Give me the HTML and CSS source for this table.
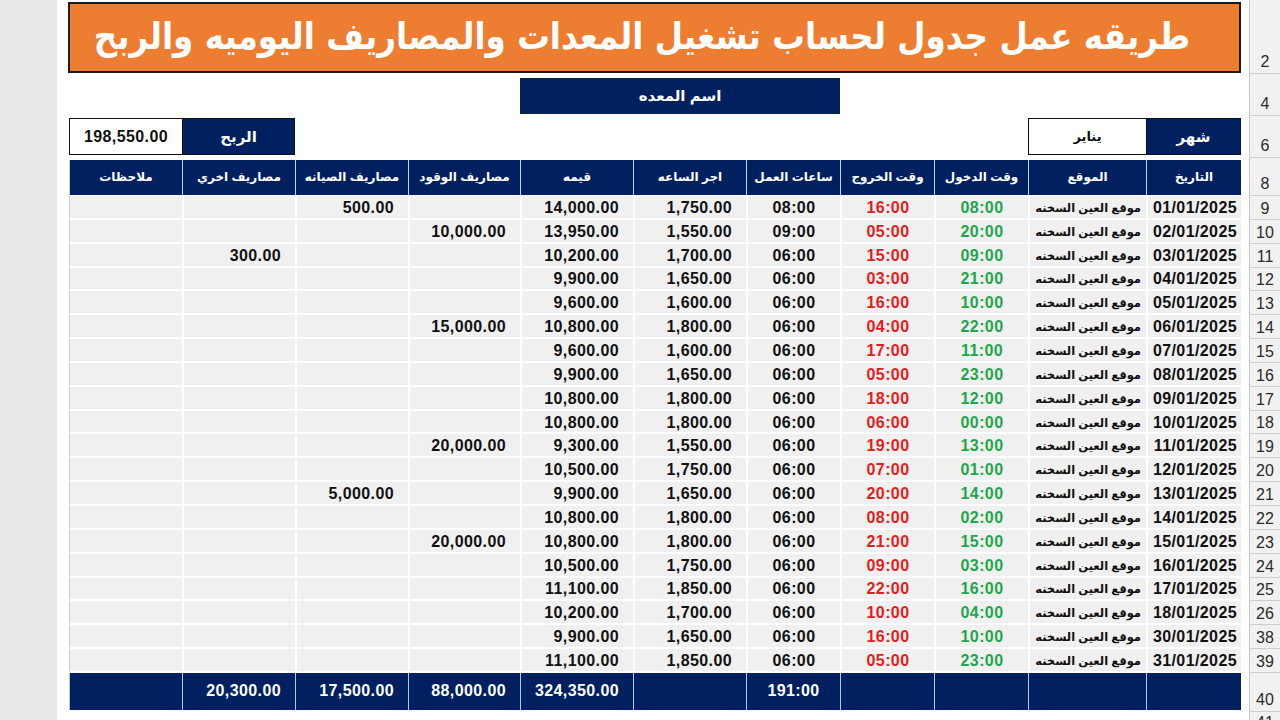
FILE: index.html
```html
<!DOCTYPE html>
<html lang="ar">
<head>
<meta charset="utf-8">
<title>جدول تشغيل المعدات</title>
<link rel="stylesheet" href="styles.css">
</head>
<body>
<div class="app">
  <div class="gutter"></div>
  <div class="sheet" dir="rtl">
    <div class="band b-title">
      <div class="rh">2</div>
      <div class="content">
        <div class="title"><span class="title-text">طريقه عمل جدول لحساب تشغيل المعدات والمصاريف اليوميه والربح</span></div>
      </div>
    </div>
    <div class="band b-name">
      <div class="rh">4</div>
      <div class="content">
        <div class="namebox">اسم المعده</div>
      </div>
    </div>
    <div class="band b-info">
      <div class="rh">6</div>
      <div class="content">
        <div class="lbl">شهر</div>
        <div class="val">يناير</div>
        <div class="lbl c-other">الربح</div>
        <div class="val num-val">198,550.00</div>
      </div>
    </div>
    <div class="band b-head">
      <div class="rh">8</div>
      <div class="content">
        <div class="h">التاريخ</div>
        <div class="h">الموقع</div>
        <div class="h">وقت الدخول</div>
        <div class="h">وقت الخروج</div>
        <div class="h">ساعات العمل</div>
        <div class="h">اجر الساعه</div>
        <div class="h">قيمه</div>
        <div class="h">مصاريف الوقود</div>
        <div class="h">مصاريف الصيانه</div>
        <div class="h">مصاريف اخري</div>
        <div class="h">ملاحظات</div>
      </div>
    </div>

    <div class="band row"><div class="rh">9</div><div class="content">
      <div class="c date">01/01/2025</div><div class="c loc">موقع العين السخنه</div><div class="c tin">08:00</div><div class="c tout">16:00</div><div class="c hrs">08:00</div><div class="c num">1,750.00</div><div class="c num">14,000.00</div><div class="c num"></div><div class="c num">500.00</div><div class="c num"></div><div class="c note"></div>
    </div></div>
    <div class="band row"><div class="rh">10</div><div class="content">
      <div class="c date">02/01/2025</div><div class="c loc">موقع العين السخنه</div><div class="c tin">20:00</div><div class="c tout">05:00</div><div class="c hrs">09:00</div><div class="c num">1,550.00</div><div class="c num">13,950.00</div><div class="c num">10,000.00</div><div class="c num"></div><div class="c num"></div><div class="c note"></div>
    </div></div>
    <div class="band row"><div class="rh">11</div><div class="content">
      <div class="c date">03/01/2025</div><div class="c loc">موقع العين السخنه</div><div class="c tin">09:00</div><div class="c tout">15:00</div><div class="c hrs">06:00</div><div class="c num">1,700.00</div><div class="c num">10,200.00</div><div class="c num"></div><div class="c num"></div><div class="c num">300.00</div><div class="c note"></div>
    </div></div>
    <div class="band row"><div class="rh">12</div><div class="content">
      <div class="c date">04/01/2025</div><div class="c loc">موقع العين السخنه</div><div class="c tin">21:00</div><div class="c tout">03:00</div><div class="c hrs">06:00</div><div class="c num">1,650.00</div><div class="c num">9,900.00</div><div class="c num"></div><div class="c num"></div><div class="c num"></div><div class="c note"></div>
    </div></div>
    <div class="band row"><div class="rh">13</div><div class="content">
      <div class="c date">05/01/2025</div><div class="c loc">موقع العين السخنه</div><div class="c tin">10:00</div><div class="c tout">16:00</div><div class="c hrs">06:00</div><div class="c num">1,600.00</div><div class="c num">9,600.00</div><div class="c num"></div><div class="c num"></div><div class="c num"></div><div class="c note"></div>
    </div></div>
    <div class="band row"><div class="rh">14</div><div class="content">
      <div class="c date">06/01/2025</div><div class="c loc">موقع العين السخنه</div><div class="c tin">22:00</div><div class="c tout">04:00</div><div class="c hrs">06:00</div><div class="c num">1,800.00</div><div class="c num">10,800.00</div><div class="c num">15,000.00</div><div class="c num"></div><div class="c num"></div><div class="c note"></div>
    </div></div>
    <div class="band row"><div class="rh">15</div><div class="content">
      <div class="c date">07/01/2025</div><div class="c loc">موقع العين السخنه</div><div class="c tin">11:00</div><div class="c tout">17:00</div><div class="c hrs">06:00</div><div class="c num">1,600.00</div><div class="c num">9,600.00</div><div class="c num"></div><div class="c num"></div><div class="c num"></div><div class="c note"></div>
    </div></div>
    <div class="band row"><div class="rh">16</div><div class="content">
      <div class="c date">08/01/2025</div><div class="c loc">موقع العين السخنه</div><div class="c tin">23:00</div><div class="c tout">05:00</div><div class="c hrs">06:00</div><div class="c num">1,650.00</div><div class="c num">9,900.00</div><div class="c num"></div><div class="c num"></div><div class="c num"></div><div class="c note"></div>
    </div></div>
    <div class="band row"><div class="rh">17</div><div class="content">
      <div class="c date">09/01/2025</div><div class="c loc">موقع العين السخنه</div><div class="c tin">12:00</div><div class="c tout">18:00</div><div class="c hrs">06:00</div><div class="c num">1,800.00</div><div class="c num">10,800.00</div><div class="c num"></div><div class="c num"></div><div class="c num"></div><div class="c note"></div>
    </div></div>
    <div class="band row"><div class="rh">18</div><div class="content">
      <div class="c date">10/01/2025</div><div class="c loc">موقع العين السخنه</div><div class="c tin">00:00</div><div class="c tout">06:00</div><div class="c hrs">06:00</div><div class="c num">1,800.00</div><div class="c num">10,800.00</div><div class="c num"></div><div class="c num"></div><div class="c num"></div><div class="c note"></div>
    </div></div>
    <div class="band row"><div class="rh">19</div><div class="content">
      <div class="c date">11/01/2025</div><div class="c loc">موقع العين السخنه</div><div class="c tin">13:00</div><div class="c tout">19:00</div><div class="c hrs">06:00</div><div class="c num">1,550.00</div><div class="c num">9,300.00</div><div class="c num">20,000.00</div><div class="c num"></div><div class="c num"></div><div class="c note"></div>
    </div></div>
    <div class="band row"><div class="rh">20</div><div class="content">
      <div class="c date">12/01/2025</div><div class="c loc">موقع العين السخنه</div><div class="c tin">01:00</div><div class="c tout">07:00</div><div class="c hrs">06:00</div><div class="c num">1,750.00</div><div class="c num">10,500.00</div><div class="c num"></div><div class="c num"></div><div class="c num"></div><div class="c note"></div>
    </div></div>
    <div class="band row"><div class="rh">21</div><div class="content">
      <div class="c date">13/01/2025</div><div class="c loc">موقع العين السخنه</div><div class="c tin">14:00</div><div class="c tout">20:00</div><div class="c hrs">06:00</div><div class="c num">1,650.00</div><div class="c num">9,900.00</div><div class="c num"></div><div class="c num">5,000.00</div><div class="c num"></div><div class="c note"></div>
    </div></div>
    <div class="band row"><div class="rh">22</div><div class="content">
      <div class="c date">14/01/2025</div><div class="c loc">موقع العين السخنه</div><div class="c tin">02:00</div><div class="c tout">08:00</div><div class="c hrs">06:00</div><div class="c num">1,800.00</div><div class="c num">10,800.00</div><div class="c num"></div><div class="c num"></div><div class="c num"></div><div class="c note"></div>
    </div></div>
    <div class="band row"><div class="rh">23</div><div class="content">
      <div class="c date">15/01/2025</div><div class="c loc">موقع العين السخنه</div><div class="c tin">15:00</div><div class="c tout">21:00</div><div class="c hrs">06:00</div><div class="c num">1,800.00</div><div class="c num">10,800.00</div><div class="c num">20,000.00</div><div class="c num"></div><div class="c num"></div><div class="c note"></div>
    </div></div>
    <div class="band row"><div class="rh">24</div><div class="content">
      <div class="c date">16/01/2025</div><div class="c loc">موقع العين السخنه</div><div class="c tin">03:00</div><div class="c tout">09:00</div><div class="c hrs">06:00</div><div class="c num">1,750.00</div><div class="c num">10,500.00</div><div class="c num"></div><div class="c num"></div><div class="c num"></div><div class="c note"></div>
    </div></div>
    <div class="band row"><div class="rh">25</div><div class="content">
      <div class="c date">17/01/2025</div><div class="c loc">موقع العين السخنه</div><div class="c tin">16:00</div><div class="c tout">22:00</div><div class="c hrs">06:00</div><div class="c num">1,850.00</div><div class="c num">11,100.00</div><div class="c num"></div><div class="c num"></div><div class="c num"></div><div class="c note"></div>
    </div></div>
    <div class="band row"><div class="rh">26</div><div class="content">
      <div class="c date">18/01/2025</div><div class="c loc">موقع العين السخنه</div><div class="c tin">04:00</div><div class="c tout">10:00</div><div class="c hrs">06:00</div><div class="c num">1,700.00</div><div class="c num">10,200.00</div><div class="c num"></div><div class="c num"></div><div class="c num"></div><div class="c note"></div>
    </div></div>
    <div class="band row"><div class="rh">38</div><div class="content">
      <div class="c date">30/01/2025</div><div class="c loc">موقع العين السخنه</div><div class="c tin">10:00</div><div class="c tout">16:00</div><div class="c hrs">06:00</div><div class="c num">1,650.00</div><div class="c num">9,900.00</div><div class="c num"></div><div class="c num"></div><div class="c num"></div><div class="c note"></div>
    </div></div>
    <div class="band row"><div class="rh">39</div><div class="content">
      <div class="c date">31/01/2025</div><div class="c loc">موقع العين السخنه</div><div class="c tin">23:00</div><div class="c tout">05:00</div><div class="c hrs">06:00</div><div class="c num">1,850.00</div><div class="c num">11,100.00</div><div class="c num"></div><div class="c num"></div><div class="c num"></div><div class="c note"></div>
    </div></div>

    <div class="band b-total">
      <div class="rh">40</div>
      <div class="content">
        <div class="t"></div><div class="t"></div><div class="t"></div><div class="t"></div>
        <div class="t hrs">191:00</div>
        <div class="t"></div>
        <div class="t num">324,350.00</div>
        <div class="t num">88,000.00</div>
        <div class="t num">17,500.00</div>
        <div class="t num">20,300.00</div>
        <div class="t"></div>
      </div>
    </div>
    <div class="band b-last">
      <div class="rh rh-cut">41</div>
      <div class="content"></div>
    </div>
  </div>
</div>
</body>
</html>
```

FILE: styles.css
```css
* { box-sizing: border-box; }
html, body { margin: 0; padding: 0; }
body {
  width: 1280px;
  height: 720px;
  overflow: hidden;
  background: #ffffff;
  font-family: "Liberation Sans", "DejaVu Sans", sans-serif;
  color: #111;
}
.app {
  display: flex;
  height: 720px;
}
.gutter {
  width: 57px;
  flex: none;
  background: #e8e8e8;
}
.sheet {
  flex: 1;
  display: flex;
  flex-direction: column;
  direction: rtl;
  background: #fff;
  overflow: hidden;
}
.band {
  display: flex;
  flex: none;
}
.rh {
  width: 31px;
  flex: none;
  background: #f1f1f1;
  border-left: 1px solid #c9c9c9;
  border-bottom: 1px solid #cdcdcd;
  display: flex;
  align-items: flex-end;
  justify-content: center;
  font-size: 16px;
  color: #2a2a2a;
  line-height: 20px;
  padding-bottom: 1px;
  position: relative;
  z-index: 1;
}
.content {
  margin-right: 8px;
  width: 1172px;
  flex: none;
  display: grid;
  grid-template-columns: 95px 118px 94px 94px 94px 113px 113px 112px 113px 113px 113px;
}

/* title */
.b-title { height: 74px; }
.title {
  grid-column: 1 / -1;
  margin-top: 2px;
  height: 71px;
  margin-left: -1px;
  background: #ed7d31;
  border: 2px solid #1b1b1b;
  color: #fff;
  display: flex;
  align-items: center;
  justify-content: center;
  padding-right: 26px;
  padding-bottom: 3px;
  overflow: hidden;
}
.title-text {
  font-family: "DejaVu Sans", sans-serif;
  font-weight: bold;
  font-size: 37px;
  white-space: nowrap;
  display: inline-block;
  transform: scaleX(0.88);
}

/* equipment name */
.b-name { height: 42px; }
.namebox {
  grid-column: 5 / 8;
  margin-top: 4px;
  height: 36px;
  background: #002060;
  border: 1px solid #1a1a2e;
  color: #fff;
  font-weight: bold;
  font-size: 15px;
  display: flex;
  align-items: center;
  justify-content: center;
}

/* month / profit */
.b-info { height: 42px; }
.b-info .lbl, .b-info .val {
  margin-top: 2px;
  height: 37px;
  display: flex;
  align-items: center;
  justify-content: center;
  font-weight: bold;
}
.b-info .lbl {
  background: #002060;
  color: #fff;
  font-size: 15px;
  border: 1px solid #111;
}
.b-info .val {
  background: #fff;
  border: 1px solid #111;
  border-right: none;
  color: #111;
  font-size: 13px;
}
.b-info .c-other { grid-column: 10; }
.b-info .num-val {
  grid-column: 11;
  direction: ltr;
  font-size: 16px;
  letter-spacing: 0.4px;
  border-right: none;
  border-left: 1px solid #111;
}

/* header */
.b-head { height: 38px; }
.h {
  margin-top: 2px;
  height: 35px;
  background: #002060;
  color: #fff;
  font-weight: bold;
  font-size: 12px;
  display: flex;
  align-items: center;
  justify-content: center;
  border-left: 1px solid #c9d0e0;
  padding-bottom: 2px;
  white-space: nowrap;
}

/* data rows */
.row { height: 23.85px; }
.row .rh { line-height: 18px; }
.c {
  background: #f0f0f0;
  border-left: 2px solid #fff;
  border-bottom: 2px solid #fff;
  font-weight: bold;
  font-size: 16px;
  letter-spacing: 0.4px;
  display: flex;
  align-items: center;
  white-space: nowrap;
  padding-top: 2px;
  overflow: hidden;
}
.c.note { border-left: 1px solid #cfcfcf; }
.date {
  direction: ltr;
  justify-content: flex-end;
  padding-right: 4px;
  color: #111;
}
.loc {
  justify-content: flex-start;
  padding-right: 5px;
  font-size: 11.5px;
  letter-spacing: 0;
  color: #111;
}
.tin, .tout, .hrs {
  direction: ltr;
  justify-content: center;
}
.tin { color: #1ea64c; }
.tout { color: #e51c1c; }
.num {
  direction: ltr;
  justify-content: flex-end;
  padding-right: 14px;
}

/* totals */
.b-total { height: 39px; }
.t {
  height: 37px;
  background: #002060;
  color: #fff;
  border-left: 1px solid #b9c3d8;
  font-weight: bold;
  font-size: 16px;
  letter-spacing: 0.4px;
  display: flex;
  align-items: center;
}
.t.hrs { justify-content: center; direction: ltr; }
.t.num { justify-content: flex-end; padding-right: 14px; }

.b-last { height: 24px; }
.rh-cut {
  align-items: flex-start;
  padding-top: 2px;
  line-height: 18px;
}
```
